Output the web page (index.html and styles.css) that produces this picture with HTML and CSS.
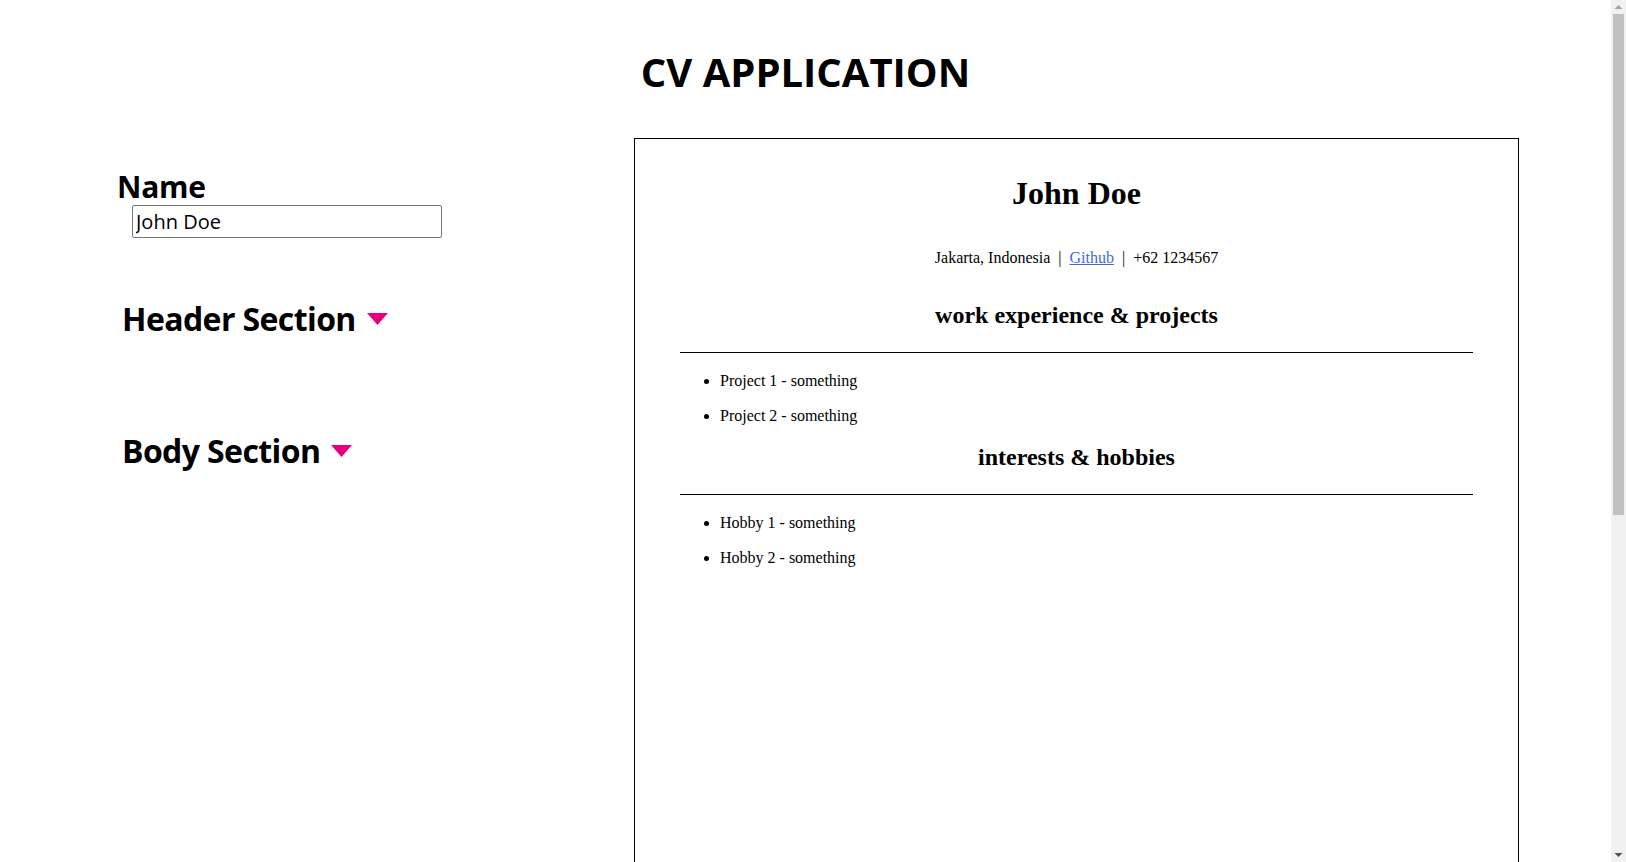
FILE: index.html
```html
<!DOCTYPE html>
<html lang="en">
<head>
<meta charset="utf-8">
<title>CV Application</title>
<link rel="stylesheet" href="styles.css">
</head>
<body>
<div class="page">
  <header class="app-header">
    <h1 class="app-title">CV APPLICATION</h1>
  </header>
  <main class="app-main">
    <section class="editor">
      <label class="field-label" for="name">Name</label>
      <input class="field-input" id="name" type="text" value="John Doe">
      <div class="toggle toggle-header">
        <h2 class="toggle-title">Header Section</h2>
        <svg class="caret" width="21" height="12" viewBox="0 0 21 12"><polygon points="0,0 21,0 10.5,12" fill="#e5007e"/></svg>
      </div>
      <div class="toggle toggle-body">
        <h2 class="toggle-title">Body Section</h2>
        <svg class="caret" width="21" height="12" viewBox="0 0 21 12"><polygon points="0,0 21,0 10.5,12" fill="#e5007e"/></svg>
      </div>
    </section>
    <section class="cv">
      <h1 class="cv-name">John Doe</h1>
      <p class="cv-contact">Jakarta, Indonesia<span class="sep">|</span><a class="cv-link" href="#">Github</a><span class="sep">|</span>+62 1234567</p>
      <div class="cv-section">
        <h2 class="cv-heading">work experience &amp; projects</h2>
        <hr class="cv-rule">
        <ul class="cv-list">
          <li>Project 1 - something</li>
          <li>Project 2 - something</li>
        </ul>
      </div>
      <div class="cv-section">
        <h2 class="cv-heading">interests &amp; hobbies</h2>
        <hr class="cv-rule">
        <ul class="cv-list">
          <li>Hobby 1 - something</li>
          <li>Hobby 2 - something</li>
        </ul>
      </div>
    </section>
  </main>
</div>
<div class="scrollbar" aria-hidden="true">
  <svg class="sb-arrow sb-up" width="15" height="14" viewBox="0 0 15 14"><polygon points="3.5,9 11.5,9 7.5,5" fill="#a3a3a3"/></svg>
  <div class="sb-thumb"></div>
  <svg class="sb-arrow sb-down" width="15" height="14" viewBox="0 0 15 14"><polygon points="3.5,5 11.5,5 7.5,9" fill="#505050"/></svg>
</div>
</body>
</html>
```
FILE: styles.css
```css
html, body {
  margin: 0;
  padding: 0;
  background: #fff;
  color: #000;
}

body {
  font-family: "Open Sans", "Noto Sans", sans-serif;
}

.page {
  width: calc(100% - 15px);
}

.app-header {
  padding-top: 45px;
  display: flex;
  justify-content: center;
}

.app-title {
  margin: 0 0 39px;
  font-size: 40px;
  line-height: 54px;
  font-weight: 700;
}

.app-main {
  display: flex;
  align-items: flex-start;
  margin-bottom: 8px;
}

.editor {
  flex: 0 0 634px;
  display: flex;
  flex-direction: column;
  align-items: flex-start;
}

.field-label {
  margin: 31px 0 0 117px;
  font-size: 30px;
  line-height: 36px;
  font-weight: 700;
  letter-spacing: -0.2px;
}

.field-input {
  margin: 0 0 0 132px;
  box-sizing: border-box;
  width: 310px;
  height: 33px;
  padding: 0 3px;
  border: 1px solid #767676;
  border-radius: 2px;
  font-family: "Open Sans", "Noto Sans", sans-serif;
  font-size: 20px;
  color: #000;
  background: #fff;
}

.toggle {
  display: flex;
  align-items: center;
  gap: 11px;
  margin-left: 122px;
}

.toggle-header {
  margin-top: 59px;
}

.toggle-body {
  margin-top: 88px;
}

.toggle-title {
  margin: 0;
  font-size: 32px;
  line-height: 44px;
  font-weight: 700;
  letter-spacing: -0.6px;
}

.caret {
  display: block;
}

.cv {
  box-sizing: border-box;
  width: 885px;
  min-height: 1289px;
  border: 1px solid #000;
  padding: 0 45px;
  display: flex;
  flex-direction: column;
  font-family: "Liberation Serif", "Times New Roman", serif;
}

.cv-name {
  margin: 36px 0 0;
  font-size: 32px;
  line-height: 37px;
  font-weight: 700;
  text-align: center;
}

.cv-contact {
  margin: 37px 0 17px;
  font-size: 16px;
  line-height: 18px;
  text-align: center;
}

.sep {
  margin: 0 8px;
}

.cv-link {
  color: #4169e1;
}

.cv-section {
  display: flex;
  flex-direction: column;
}

.cv-heading {
  margin: 17px 0 0;
  font-size: 24px;
  line-height: 28px;
  font-weight: 700;
  text-align: center;
}

.cv-section + .cv-section .cv-heading {
  margin-top: 18px;
}

.cv-rule {
  margin: 23px 0 0;
  border: 0;
  border-top: 1px solid #000;
  height: 0;
}

.cv-list {
  margin: 0;
  padding: 19px 0 0 40px;
  display: flex;
  flex-direction: column;
  gap: 17px;
}

.cv-list li {
  font-size: 16px;
  line-height: 18px;
}

/* simulated browser scrollbar (overlay on the right edge) */
.scrollbar {
  position: fixed;
  top: 0;
  right: 0;
  width: 15px;
  height: 100vh;
  background: #f1f1f1;
  display: flex;
  flex-direction: column;
  align-items: center;
}

.sb-arrow {
  display: block;
  flex: 0 0 auto;
}

.sb-thumb {
  width: 11px;
  height: 501px;
  background: #c1c1c1;
}

.sb-down {
  margin-top: auto;
}
```
